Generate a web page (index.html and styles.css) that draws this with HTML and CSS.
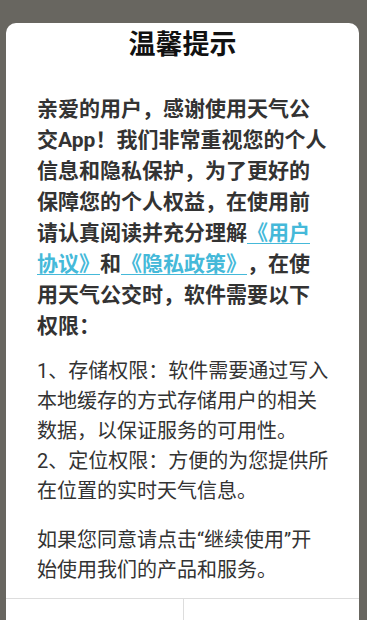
FILE: index.html
```html
<!DOCTYPE html>
<html lang="zh-CN">
<head>
<meta charset="utf-8">
<meta name="viewport" content="width=device-width, initial-scale=1">
<title>温馨提示</title>
<link rel="stylesheet" href="styles.css">
</head>
<body>
<div class="dialog">
  <h1 class="title">温馨提示</h1>
  <div class="content">
    <p class="lead">亲爱的用户，感谢使用天气公交App！我们非常重视您的个人信息和隐私保护，为了更好的保障您的个人权益，在使用前请认真阅读并充分理解<a class="link" href="#">《用户协议》</a>和<a class="link" href="#">《隐私政策》</a>，在使用天气公交时，软件需要以下权限：</p>
    <p class="text">1、存储权限：软件需要通过写入本地缓存的方式存储用户的相关数据，以保证服务的可用性。<br>2、定位权限：方便的为您提供所在位置的实时天气信息。</p>
    <p class="text last">如果您同意请点击“继续使用”开始使用我们的产品和服务。</p>
  </div>
  <div class="actions">
    <button class="btn">不同意</button>
    <button class="btn primary">继续使用</button>
  </div>
</div>
</body>
</html>
```
FILE: styles.css
```css
html, body {
  margin: 0;
  padding: 0;
}
body {
  background: #686660;
  height: 620px;
  overflow: hidden;
  font-family: Roboto, "Noto Sans CJK SC", sans-serif;
  text-spacing-trim: space-all;
}
.dialog {
  margin: 23px 8px 0 6px;
  background: #ffffff;
  border-radius: 10px 10px 0 0;
  display: flex;
  flex-direction: column;
}
.title {
  margin: 0;
  height: 44px;
  line-height: 44px;
  text-align: center;
  font-size: 27px;
  font-weight: 700;
  color: #111111;
}
.content {
  padding: 27px 29px 13px 31px;
}
.lead {
  margin: 0;
  font-size: 21px;
  line-height: 31px;
  font-weight: 700;
  color: #333333;
}
.link {
  color: #45b9d9;
  text-decoration: underline;
  text-decoration-thickness: 1px;
  text-underline-offset: 3px;
}
.text {
  margin: 14px 0 0;
  font-size: 20px;
  line-height: 30px;
  color: #333333;
}
.text.last {
  margin-top: 19px;
}
.actions {
  display: grid;
  grid-template-columns: 1fr 1fr;
  border-top: 1px solid #dddddd;
}
.btn {
  height: 80px;
  border: 0;
  background: transparent;
  font-family: inherit;
  font-size: 19px;
  color: #666666;
}
.btn.primary {
  border-left: 1px solid #dddddd;
  color: #45b9d9;
}
```
